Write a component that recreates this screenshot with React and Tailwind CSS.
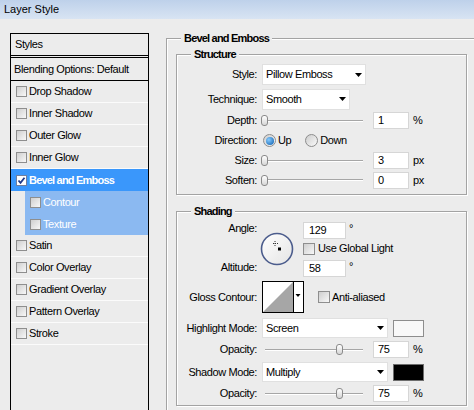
import React from 'react';

const effects = [
  { name: 'Drop Shadow' },
  { name: 'Inner Shadow' },
  { name: 'Outer Glow' },
  { name: 'Inner Glow' },
  { name: 'Bevel and Emboss', active: true, checked: true },
  { name: 'Contour', sub: true },
  { name: 'Texture', sub: true },
  { name: 'Satin' },
  { name: 'Color Overlay' },
  { name: 'Gradient Overlay' },
  { name: 'Pattern Overlay' },
  { name: 'Stroke' },
];

const CheckBox = ({ checked, big }) => (
  <span
    className={`${big ? 'w-[12px] h-[12px]' : 'w-[11px] h-[11px]'} shrink-0 flex items-center justify-center border ${
      checked ? 'border-[#6f7f9f] bg-white' : 'border-[#8e8e8e] bg-linear-to-br from-[#cfcfcf] to-[#f8f8f8]'
    }`}
  >
    {checked && (
      <svg width="9" height="9" viewBox="0 0 9 9">
        <path d="M1.5 4.5 L3.5 6.8 L7.5 1.8" fill="none" stroke="#1f3a8a" strokeWidth="1.8" />
      </svg>
    )}
  </span>
);

const EffectRow = ({ effect }) => {
  if (effect.active) {
    return (
      <div className="h-[22px] flex items-center gap-[2px] pl-[5px] bg-[#3a97fb] text-white font-bold tracking-[-0.8px]">
        <CheckBox checked />
        <span>{effect.name}</span>
      </div>
    );
  }
  if (effect.sub) {
    return (
      <div className="h-[22px] pl-[14px]">
        <div className="h-full flex items-center gap-[2px] pl-[5px] bg-[#8bb9f1] text-white">
          <CheckBox />
          <span>{effect.name}</span>
        </div>
      </div>
    );
  }
  return (
    <div className="h-[22px] flex items-center gap-[2px] pl-[5px] border-b border-[#fbfbfb]">
      <CheckBox />
      <span>{effect.name}</span>
    </div>
  );
};

const StylesPanel = () => (
  <div className="ml-[10px] mt-[14px] w-[139px] h-[390px] shrink-0 border border-black">
    <div className="h-[24px] pl-[4px] flex items-center border-b-[3px] border-double border-black">Styles</div>
    <div className="h-[23px] pl-[3px] flex items-center border-b border-black">Blending Options: Default</div>
    {effects.map((e) => (
      <EffectRow key={e.name} effect={e} />
    ))}
  </div>
);

const Arrow = () => (
  <svg width="7" height="4" viewBox="0 0 7 4" className="shrink-0">
    <path d="M0 0 H7 L3.5 4 Z" fill="#000" />
  </svg>
);

const Select = ({ value, className }) => (
  <div className={`bg-white border border-[#e0e0e0] flex items-center justify-between pl-[3px] pr-[3px] ${className}`}>
    <span>{value}</span>
    <Arrow />
  </div>
);

const Field = ({ value, wide }) => (
  <div
    className={`${wide ? 'w-[43px] pl-[5px]' : 'w-[36px] pl-[4px]'} h-[17px] bg-white border border-[#d6d6d6] flex items-center`}
  >
    {value}
  </div>
);

const Track = ({ className = '' }) => <div className={`h-[2px] border-t border-[#a6a6a6] bg-white ${className}`} />;

const Thumb = () => (
  <div className="w-[7px] h-[11px] shrink-0 rounded-[3px] border border-[#8a8a8a] bg-linear-to-b from-white to-[#d6d6d6]" />
);

const Slider = ({ mid }) => (
  <div className="ml-[4px] w-[103px] h-[14px] flex items-center pr-[1px]">
    {mid && <Track className="ml-[4px] w-[71px]" />}
    <Thumb />
    <Track className="flex-1" />
  </div>
);

const Label = ({ children }) => <span className="w-[80px] shrink-0 text-right">{children}</span>;

const Radio = ({ on }) => (
  <span className="w-[13px] h-[13px] rounded-full border border-[#8c8c8c] bg-linear-to-br from-[#cdcdcd] to-[#fafafa] flex items-center justify-center">
    {on && <span className="w-[8px] h-[8px] rounded-full bg-[radial-gradient(circle_at_35%_35%,#86cbff,#0b5cab)]" />}
  </span>
);

const SliderRow = ({ label, value, unit, mid, h }) => (
  <div className={`flex items-center ${h}`}>
    <Label>{label}</Label>
    <Slider mid={mid} />
    <div className="ml-[9px]">
      <Field value={value} />
    </div>
    <span className="ml-[4px]">{unit}</span>
  </div>
);

const AngleWheel = () => (
  <svg width="34" height="34" viewBox="0 0 34 34">
    <defs>
      <linearGradient id="wheel" x1="0" y1="0" x2="1" y2="1">
        <stop offset="0" stopColor="#ffffff" />
        <stop offset="1" stopColor="#e4e4e4" />
      </linearGradient>
    </defs>
    <circle cx="17" cy="17" r="15.5" fill="url(#wheel)" stroke="#4b5c8c" strokeWidth="1.6" />
    <path d="M15 9v5M13 11.5h5" stroke="#333" strokeWidth="1" strokeDasharray="1 1" />
    <rect x="18" y="15.5" width="3" height="3" fill="#000" />
  </svg>
);

const ContourPicker = () => (
  <svg width="42" height="32" viewBox="0 0 42 32" className="shrink-0">
    <rect x="0.5" y="0.5" width="41" height="31" fill="#fff" stroke="#000" />
    <path d="M1 31 L31 1 V31 Z" fill="#a6a6a6" />
    <path d="M31.5 0.5 V31.5" stroke="#000" />
    <path d="M33.5 13 H38.5 L36 16 Z" fill="#000" />
  </svg>
);

const Swatch = ({ dark }) => (
  <div className={`ml-[5px] w-[31px] h-[17px] border ${dark ? 'bg-black border-[#6d6d6d]' : 'bg-[#f8f8f8] border-[#8d8d8d]'}`} />
);

const legendCls = 'ml-[14px] px-[3px] font-bold tracking-[-0.8px] leading-[13px] bg-[#ececec]';
const groupCls = 'border border-[#a3a3a3] shadow-[inset_1px_1px_0_#ffffff,1px_1px_0_#ffffff]';

export default function App() {
  return (
    <div className="w-[474px] h-[410px] overflow-hidden bg-[#ececec] text-black text-[11px] leading-[13px] tracking-[-0.4px] font-['Liberation_Sans',Arial,sans-serif]">
      <div className="h-[19px] flex items-center pl-[4px] tracking-normal bg-linear-to-b from-[#bed1ea] to-[#d8e4f3]">
        Layer Style
      </div>
      <div className="flex items-start">
        <StylesPanel />
        <fieldset className={`ml-[17px] mt-[13px] w-[330px] h-[400px] shrink-0 ${groupCls}`}>
          <legend className={legendCls}>Bevel and Emboss</legend>

          <fieldset className={`ml-[9px] mt-[3px] w-[291px] pt-[1px] pb-[4px] ${groupCls}`}>
            <legend className={legendCls}>Structure</legend>
            <div className="h-[25px] flex items-center">
              <Label>Style:</Label>
              <Select value="Pillow Emboss" className="ml-[5px] w-[104px] h-[21px]" />
            </div>
            <div className="h-[24px] flex items-center">
              <Label>Technique:</Label>
              <Select value="Smooth" className="ml-[5px] w-[88px] h-[21px]" />
            </div>
            <SliderRow label="Depth:" value="1" unit="%" h="h-[19px]" />
            <div className="h-[21px] flex items-center">
              <Label>Direction:</Label>
              <div className="ml-[6px] flex items-center gap-[2px]">
                <Radio on />
                <span>Up</span>
              </div>
              <div className="ml-[14px] flex items-center gap-[2px]">
                <Radio />
                <span>Down</span>
              </div>
            </div>
            <SliderRow label="Size:" value="3" unit="px" h="h-[19px]" />
            <SliderRow label="Soften:" value="0" unit="px" h="h-[20px]" />
          </fieldset>

          <fieldset className={`ml-[9px] mt-[10px] w-[291px] pt-[4px] pb-[2px] ${groupCls}`}>
            <legend className={legendCls}>Shading</legend>
            <div className="flex items-start">
              <div className="w-[80px] h-[54px] shrink-0 flex flex-col justify-between items-end">
                <span>Angle:</span>
                <span className="h-[17px] flex items-center">Altitude:</span>
              </div>
              <div className="ml-[3px] pt-[10px]">
                <AngleWheel />
              </div>
              <div className="ml-[9px] flex flex-col">
                <div className="flex items-start">
                  <Field value="129" wide />
                  <span className="ml-[3px]">°</span>
                </div>
                <div className="mt-[3px] flex items-center gap-[3px]">
                  <CheckBox big />
                  <span>Use Global Light</span>
                </div>
                <div className="mt-[5px] flex items-start">
                  <Field value="58" wide />
                  <span className="ml-[3px]">°</span>
                </div>
              </div>
            </div>
            <div className="mt-[4px] h-[32px] flex items-center">
              <Label>Gloss Contour:</Label>
              <div className="ml-[5px]">
                <ContourPicker />
              </div>
              <div className="ml-[14px] flex items-center gap-[2px]">
                <CheckBox big />
                <span>Anti-aliased</span>
              </div>
            </div>
            <div className="mt-[5px] h-[20px] flex items-center">
              <Label>Highlight Mode:</Label>
              <Select value="Screen" className="ml-[5px] w-[126px] h-[20px] pr-[2px]" />
              <Swatch />
            </div>
            <SliderRow label="Opacity:" value="75" unit="%" mid h="mt-[2px] h-[19px]" />
            <div className="mt-[3px] h-[20px] flex items-center">
              <Label>Shadow Mode:</Label>
              <Select value="Multiply" className="ml-[5px] w-[126px] h-[20px] pr-[2px]" />
              <Swatch dark />
            </div>
            <SliderRow label="Opacity:" value="75" unit="%" mid h="mt-[2px] h-[19px]" />
          </fieldset>
        </fieldset>
      </div>
    </div>
  );
}
